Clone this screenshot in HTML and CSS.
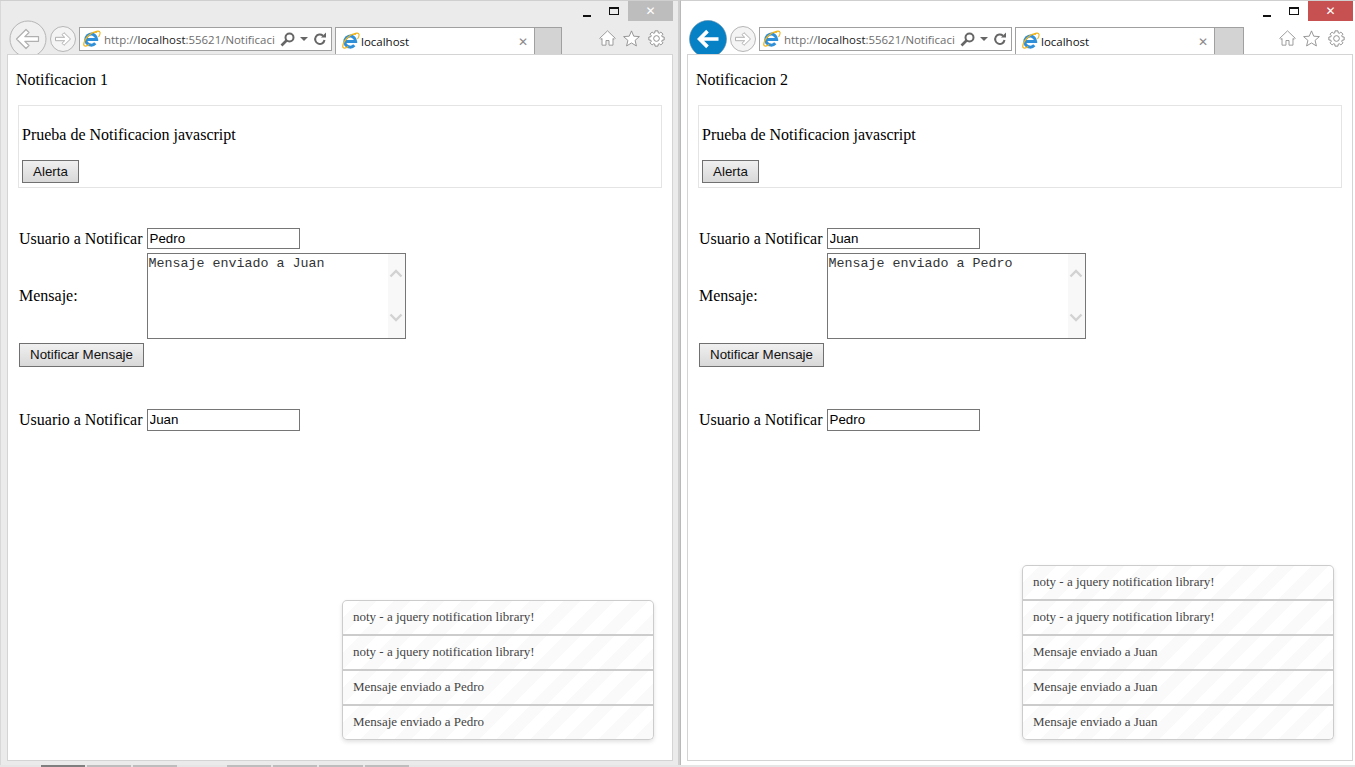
FILE: index.html
```html
<!DOCTYPE html>
<html lang="es">
<head>
<meta charset="utf-8">
<title>Notificaciones</title>
<link rel="stylesheet" href="styles.css">
</head>
<body>
<svg class="defs" aria-hidden="true">
  <symbol id="i-back" viewBox="0 0 38 38">
    <circle cx="19" cy="19" r="18" fill="#f0f0f0" stroke="#b5b5b5"/>
    <path d="M7.500 19 17 9.500l3 3-4.200 4.200h13.700v4.600H15.800l4.200 4.200-3 3z" fill="#fff" stroke="#b0b0b0" stroke-width="1.200" stroke-linejoin="round"/>
  </symbol>
  <symbol id="i-back-on" viewBox="0 0 38 38">
    <circle cx="19" cy="19" r="18.500" fill="#0681c5" stroke="#5b8aa8" stroke-width=".6"/>
    <path d="M8 19 17.200 9.800l2.600 2.600-4.800 4.800h14.500v3.600H15l4.800 4.800-2.600 2.600z" fill="#fff"/>
  </symbol>
  <symbol id="i-fwd" viewBox="0 0 26 26">
    <circle cx="13" cy="13" r="12.500" fill="#f4f4f4" stroke="#b5b5b5"/>
    <path d="M20.500 13 14 6.700l-2 2 2.700 2.600H5.500v3.400h9.200L12 17.300l2 2z" fill="#fff" stroke="#b0b0b0" stroke-linejoin="round"/>
  </symbol>
  <symbol id="i-ie" viewBox="0 0 18 18">
    <path d="M3.500 9.500h10.200A5.500 5.500 0 1 0 12.300 13.300" fill="none" stroke="#2f8fd8" stroke-width="3"/>
    <path d="M14 2.300c-3-1.300-8.500 2-11.500 7-1.500 2.800-2.300 5.300-1.300 6.300 1 1 3.300.3 5-1" fill="none" stroke="#efb31a" stroke-width="1.300"/>
    <path d="M12 2c2.300-1.300 4.600-1.300 5 .5.300 1.200-.5 3-1.500 4.500" fill="none" stroke="#efb31a" stroke-width="1.100"/>
  </symbol>
  <symbol id="i-search" viewBox="0 0 15 15">
    <circle cx="9.500" cy="5.500" r="4" fill="none" stroke="#666" stroke-width="2"/>
    <path d="M6.500 8.500 1.500 13.500" stroke="#666" stroke-width="2.600"/>
  </symbol>
  <symbol id="i-refresh" viewBox="0 0 14 14">
    <path d="M11.500 8a4.700 4.700 0 1 1-1.500-4.300" fill="none" stroke="#666" stroke-width="2"/>
    <path d="M8 5.500h5v-5z" fill="#666"/>
  </symbol>
  <symbol id="i-home" viewBox="0 0 20 19">
    <path d="M10 1 .8 9.800l1.400 1.400L3.500 10v8h4.700v-5.500h3.600V18h4.700v-8l1.300 1.200 1.400-1.400z" fill="#fff" stroke="#8c8c8c" stroke-linejoin="round"/>
  </symbol>
  <symbol id="i-star" viewBox="0 0 19 19">
    <path d="M9.500 1 12 6.900l6.300.5-4.800 4.200 1.500 6.200-5.500-3.300L4 17.800l1.500-6.200L.7 7.400 7 6.900z" fill="#fff" stroke="#8c8c8c" stroke-linejoin="round"/>
  </symbol>
  <symbol id="i-gear" viewBox="0 0 20 20">
    <polygon points="15.930,8.190 18.050,8.440 18.050,11.560 15.930,11.810 15.470,12.910 16.790,14.590 14.590,16.790 12.910,15.470 11.810,15.930 11.560,18.050 8.440,18.050 8.190,15.930 7.090,15.470 5.410,16.790 3.210,14.590 4.530,12.910 4.070,11.810 1.950,11.560 1.950,8.440 4.070,8.190 4.530,7.090 3.210,5.410 5.410,3.210 7.090,4.530 8.190,4.070 8.440,1.950 11.560,1.950 11.810,4.070 12.910,4.530 14.590,3.210 16.790,5.410 15.470,7.090" fill="#fff" stroke="#8c8c8c"/>
    <circle cx="10" cy="10" r="3" fill="#fff" stroke="#8c8c8c"/>
  </symbol>
  <symbol id="i-up" viewBox="0 0 14 9">
    <path d="M1.500 7.500 7 2l5.500 5.500" fill="none" stroke="#d2d2d2" stroke-width="2.400"/>
  </symbol>
  <symbol id="i-down" viewBox="0 0 14 9">
    <path d="M1.500 1.500 7 7l5.500-5.500" fill="none" stroke="#d2d2d2" stroke-width="2.400"/>
  </symbol>
</svg>

<div class="desktop">
  <section class="window window-left">
    <div class="controls">
      <span class="ctl ctl-min"><i class="glyph-min"></i></span>
      <span class="ctl ctl-max"><i class="glyph-max"></i></span>
      <span class="ctl ctl-close">✕</span>
    </div>
    <div class="toolbar">
      <svg class="btn-back"><use href="#i-back"/></svg>
      <svg class="btn-fwd"><use href="#i-fwd"/></svg>
      <div class="address">
        <svg class="ie"><use href="#i-ie"/></svg>
        <span class="url">http://<b>localhost</b>:55621/Notificaci</span>
        <svg class="a-search"><use href="#i-search"/></svg>
        <i class="a-caret"></i>
        <svg class="a-refresh"><use href="#i-refresh"/></svg>
      </div>
      <div class="tab">
        <svg class="ie"><use href="#i-ie"/></svg>
        <span class="tab-title">localhost</span>
        <span class="tab-close">✕</span>
      </div>
      <div class="tab-new"></div>
      <div class="tools">
        <svg class="t-home"><use href="#i-home"/></svg>
        <svg class="t-star"><use href="#i-star"/></svg>
        <svg class="t-gear"><use href="#i-gear"/></svg>
      </div>
    </div>
    <main class="pane">
      <p class="page-title">Notificacion 1</p>
      <div class="demo-box">
        <p class="demo-text">Prueba de Notificacion javascript</p>
        <button class="btn btn-alert" type="button">Alerta</button>
      </div>
      <table class="form form-main">
        <tr><td>Usuario a Notificar</td><td><input class="field" type="text" value="Pedro"></td></tr>
        <tr>
          <td>Mensaje:</td>
          <td><div class="ta-wrap"><textarea class="ta">Mensaje enviado a Juan</textarea><div class="ta-bar"><svg class="ta-arrow"><use href="#i-up"/></svg><svg class="ta-arrow"><use href="#i-down"/></svg></div></div></td>
        </tr>
        <tr><td colspan="2"><button class="btn btn-send" type="button">Notificar Mensaje</button></td></tr>
      </table>
      <table class="form form-second">
        <tr><td>Usuario a Notificar</td><td><input class="field field-tall" type="text" value="Juan"></td></tr>
      </table>
      <ul class="noty">
        <li>noty - a jquery notification library!</li>
        <li>noty - a jquery notification library!</li>
        <li>Mensaje enviado a Pedro</li>
        <li>Mensaje enviado a Pedro</li>
      </ul>
    </main>
  </section>

  <section class="window window-right">
    <div class="controls">
      <span class="ctl ctl-min"><i class="glyph-min"></i></span>
      <span class="ctl ctl-max"><i class="glyph-max"></i></span>
      <span class="ctl ctl-close">✕</span>
    </div>
    <div class="toolbar">
      <svg class="btn-back"><use href="#i-back-on"/></svg>
      <svg class="btn-fwd"><use href="#i-fwd"/></svg>
      <div class="address">
        <svg class="ie"><use href="#i-ie"/></svg>
        <span class="url">http://<b>localhost</b>:55621/Notificaci</span>
        <svg class="a-search"><use href="#i-search"/></svg>
        <i class="a-caret"></i>
        <svg class="a-refresh"><use href="#i-refresh"/></svg>
      </div>
      <div class="tab">
        <svg class="ie"><use href="#i-ie"/></svg>
        <span class="tab-title">localhost</span>
        <span class="tab-close">✕</span>
      </div>
      <div class="tab-new"></div>
      <div class="tools">
        <svg class="t-home"><use href="#i-home"/></svg>
        <svg class="t-star"><use href="#i-star"/></svg>
        <svg class="t-gear"><use href="#i-gear"/></svg>
      </div>
    </div>
    <main class="pane">
      <p class="page-title">Notificacion 2</p>
      <div class="demo-box">
        <p class="demo-text">Prueba de Notificacion javascript</p>
        <button class="btn btn-alert" type="button">Alerta</button>
      </div>
      <table class="form form-main">
        <tr><td>Usuario a Notificar</td><td><input class="field" type="text" value="Juan"></td></tr>
        <tr>
          <td>Mensaje:</td>
          <td><div class="ta-wrap"><textarea class="ta">Mensaje enviado a Pedro</textarea><div class="ta-bar"><svg class="ta-arrow"><use href="#i-up"/></svg><svg class="ta-arrow"><use href="#i-down"/></svg></div></div></td>
        </tr>
        <tr><td colspan="2"><button class="btn btn-send" type="button">Notificar Mensaje</button></td></tr>
      </table>
      <table class="form form-second">
        <tr><td>Usuario a Notificar</td><td><input class="field field-tall" type="text" value="Pedro"></td></tr>
      </table>
      <ul class="noty">
        <li>noty - a jquery notification library!</li>
        <li>noty - a jquery notification library!</li>
        <li>Mensaje enviado a Juan</li>
        <li>Mensaje enviado a Juan</li>
        <li>Mensaje enviado a Juan</li>
      </ul>
    </main>
  </section>
</div>

<div class="taskbar">
  <span class="task task-dark"></span>
  <span class="task"></span>
  <span class="task"></span>
  <span class="task-gap"></span>
  <span class="task"></span>
  <span class="task"></span>
  <span class="task"></span>
  <span class="task"></span>
</div>
</body>
</html>
```

FILE: styles.css
```css
* { box-sizing: border-box; }

html, body {
  margin: 0;
  padding: 0;
  height: 100%;
  overflow: hidden;
  background: #e6e6e6;
}

.defs {
  position: absolute;
  width: 0;
  height: 0;
}

.desktop {
  display: flex;
  height: 765px;
}

.window {
  height: 765px;
  border-top: 1px solid #cfcfcf;
  flex: none;
}

.window-left {
  width: 680px;
  padding-left: 7px;
  background: #ebebeb;
  border-left: 0;
  border-right: 2px solid #cfcfcf;
  box-shadow: inset 1px 0 0 #d8d8d8;
}

.window-right {
  width: 675px;
  padding-left: 6px;
  background: #fff;
  border-left: 1px solid #b9b9b9;
}

/* title bar buttons */
.controls {
  display: flex;
  justify-content: flex-end;
  width: 666px;
  height: 20px;
}

.ctl {
  display: flex;
  align-items: center;
  justify-content: center;
  height: 20px;
}

.ctl-min { width: 26px; padding-top: 3px; }
.ctl-max { width: 28px; }

.ctl-close {
  width: 45px;
  margin-left: 0;
  background: #bdbdbd;
  color: #fff;
  font: bold 12px "DejaVu Sans", sans-serif;
}

.window-right .ctl-close { background: #c75050; }

.glyph-min {
  display: block;
  width: 8px;
  height: 2px;
  margin-top: 6px;
  background: #111;
}

.glyph-max {
  display: block;
  width: 10px;
  height: 8px;
  border: 1px solid #111;
  border-top-width: 2px;
}

/* toolbar */
.toolbar {
  display: flex;
  align-items: flex-start;
  width: 666px;
  height: 33px;
  margin-left: 0;
}

.btn-back {
  flex: none;
  width: 38px;
  height: 38px;
  margin: -1px 0 0 2px;
}

.btn-fwd {
  flex: none;
  width: 26px;
  height: 26px;
  margin: 5px 0 0 3px;
}

.address {
  flex: none;
  display: flex;
  align-items: center;
  width: 253px;
  height: 24px;
  margin: 6px 0 0 3px;
  padding-left: 3px;
  background: #fff;
  border: 1px solid #a0a0a0;
}

.ie {
  flex: none;
  width: 18px;
  height: 18px;
}

.url {
  flex: none;
  width: 173px;
  margin-left: 3px;
  padding-top: 1px;
  color: #6d6d6d;
  font: 11.45px/20px "Open Sans", sans-serif;
  white-space: nowrap;
}

.url b {
  color: #222;
  font-weight: 400;
}

.a-search {
  flex: none;
  width: 15px;
  height: 15px;
  margin-left: 3px;
}

.a-caret {
  flex: none;
  width: 0;
  height: 0;
  margin-left: 5px;
  border: 4px solid transparent;
  border-top: 4px solid #666;
  border-bottom: 0;
}

.a-refresh {
  flex: none;
  width: 14px;
  height: 14px;
  margin-left: 5px;
}

.tab {
  flex: none;
  display: flex;
  align-items: center;
  width: 200px;
  height: 27px;
  margin: 6px 0 0 3px;
  padding: 0 6px 0 6px;
  background: #fff;
  border: 1px solid #a0a0a0;
  border-bottom: 0;
}

.tab-title {
  flex: 1;
  margin-left: 1px;
  padding-top: 2px;
  color: #111;
  font: 11.5px/24px "Open Sans", sans-serif;
}

.tab-close {
  padding-top: 2px;
  color: #8a8a8a;
  font: bold 12px "DejaVu Sans", sans-serif;
}

.tab-new {
  flex: none;
  width: 27px;
  height: 27px;
  margin-top: 6px;
  background: #d3d3d3;
  border-top: 1px solid #a0a0a0;
  border-right: 1px solid #a0a0a0;
}

.window-right .tab-new { width: 29px; }

.tools {
  flex: none;
  display: flex;
  align-items: center;
  height: 20px;
  margin: 7px 0 0 37px;
}

.window-right .tools { margin-left: 35px; }

.t-home { width: 17px; height: 16px; }
.t-star { width: 17px; height: 17px; margin-left: 7px; }
.t-gear { width: 19px; height: 19px; margin-left: 7px; }

/* page */
.pane {
  position: relative;
  width: 666px;
  height: 707px;
  padding: 0 8px;
  background: #fff;
  border: 1px solid #d4d4d4;
  color: #000;
  font: 16px/18px "Liberation Serif", serif;
}

.page-title {
  margin: 0;
  padding-top: 16px;
}

.demo-box {
  width: 644px;
  height: 83px;
  margin: 16px 0 0 2px;
  padding: 0 3px;
  border: 1px solid #e4e4e4;
}

.demo-text {
  margin: 0;
  padding-top: 20px;
}

.btn {
  display: block;
  padding: 0;
  background: linear-gradient(#f0f0f0, #d8d8d8);
  border: 1px solid #707070;
  border-radius: 0;
  color: #111;
  font: 13.33px "Liberation Sans", sans-serif;
}

.btn-alert {
  width: 57px;
  height: 23px;
  margin-top: 16px;
}

.btn-send {
  width: 125px;
  height: 24px;
  padding-bottom: 2px;
}

.form {
  border-collapse: separate;
  border-spacing: 2px;
}

.form td {
  padding: 1px;
  vertical-align: middle;
}

.form-main { margin-top: 37px; }
.form-second { margin-top: 36px; }

.field {
  display: block;
  width: 153px;
  height: 21px;
  padding: 0 2px;
  border: 1px solid #767676;
  border-radius: 0;
  color: #000;
  font: 13.33px "Liberation Sans", sans-serif;
}

.field-tall {
  height: 22px;
  padding-bottom: 2px;
}

.ta-wrap {
  position: relative;
  width: 259px;
  height: 86px;
}

.ta {
  display: block;
  width: 100%;
  height: 100%;
  padding: 2px 1px 1px;
  overflow: hidden;
  resize: none;
  border: 1px solid #767676;
  border-radius: 0;
  color: #333;
  font: 13.33px/15px "Liberation Mono", monospace;
}

.ta-bar {
  position: absolute;
  top: 1px;
  right: 1px;
  bottom: 1px;
  display: flex;
  flex-direction: column;
  justify-content: space-between;
  align-items: center;
  width: 17px;
  padding: 15px 0 16px;
  background: #f8f8f8;
}

.ta-arrow {
  width: 14px;
  height: 9px;
}

/* notifications */
.noty {
  position: absolute;
  right: 18px;
  bottom: 20px;
  width: 312px;
  margin: 0;
  padding: 0;
  list-style: none;
  border-radius: 5px;
  box-shadow: 0 2px 4px rgba(0, 0, 0, .12);
}

.noty li {
  height: 35px;
  padding: 8px 10px 0;
  background-color: #fcfcfc;
  background-image: repeating-linear-gradient(135deg, #fff 0 12px, #fafafa 12px 24px);
  border: 1px solid #ccc;
  border-top: 0;
  border-bottom: 2px solid #ccc;
  color: #444;
  font: 13px/16px "Liberation Serif", serif;
}

.noty li:first-child {
  height: 36px;
  border-top: 1px solid #ccc;
  border-radius: 5px 5px 0 0;
}

.noty li:last-child {
  height: 34px;
  border-bottom: 1px solid #ccc;
  border-radius: 0 0 5px 5px;
}

/* taskbar sliver */
.taskbar {
  display: flex;
  gap: 2px;
  height: 2px;
  padding-left: 41px;
}

.task {
  width: 44px;
  background: #bdbdbd;
}

.task-dark { background: #7f7f7f; }
.task-gap { width: 46px; }
```
